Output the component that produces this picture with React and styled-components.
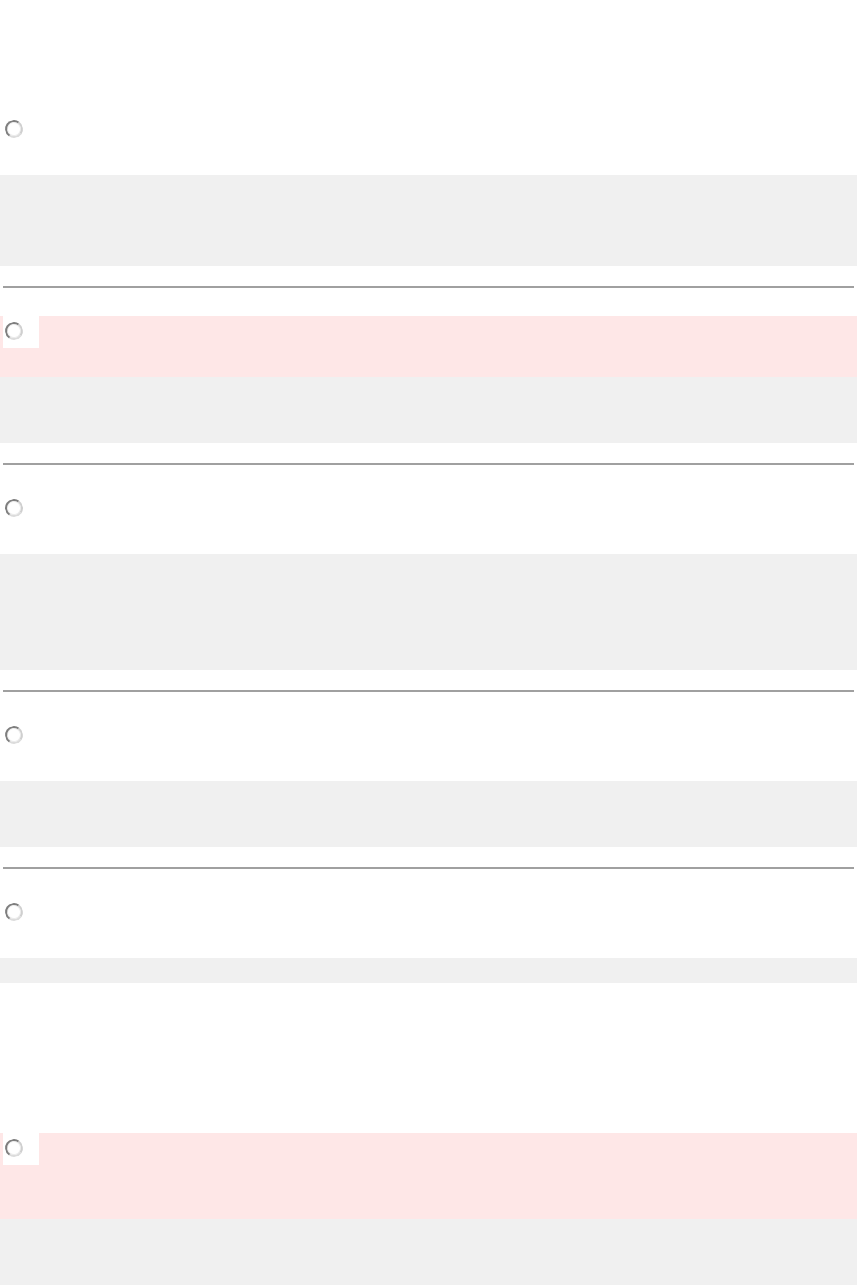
import React from "react";
import styled, { createGlobalStyle } from "styled-components";

const Global = createGlobalStyle`
  html, body { margin: 0; padding: 0; background: #ffffff; }
  body { font-family: "Liberation Sans", Arial, sans-serif; }
`;

const Page = styled.div`
  width: 857px;
  min-height: 1285px;
  padding-top: 114px;
  box-sizing: border-box;
  display: flex;
  flex-direction: column;
`;

const Question = styled.section`
  display: flex;
  flex-direction: column;
  margin-top: ${(p) => p.$gap || 0}px;
`;

const Header = styled.div`
  height: ${(p) => p.$h || 61}px;
  background: ${(p) => (p.$error ? "#fee7e7" : "#ffffff")};
  display: flex;
  align-items: flex-start;
`;

const RadioCell = styled.div`
  width: 36px;
  height: 32px;
  margin-left: 3px;
  padding: 6px 0 0 2px;
  box-sizing: border-box;
  background: #ffffff;
`;

const Radio = styled.span`
  display: block;
  width: 18px;
  height: 18px;
  box-sizing: border-box;
  border-radius: 50%;
  border: 2px solid;
  border-color: #7e7e7e #cfcfcf #dcdcdc #7e7e7e;
  background: #ffffff;
  box-shadow: inset 0 0 0 1px #ececec;
  transform: rotate(-10deg);
`;

const Body = styled.div`
  height: ${(p) => p.$h}px;
  background: #f0f0f0;
`;

const Rule = styled.hr`
  margin: 20px 3px 28px;
  border: 0;
  border-top: 2px solid #a0a0a0;
  height: 0;
`;

const questions = [
  { body: 91 },
  { body: 66, error: true },
  { body: 116 },
  { body: 66 },
  { body: 25, last: true },
];

export default function App() {
  return (
    <>
      <Global />
      <Page>
        {questions.map((q, i) => (
          <React.Fragment key={i}>
            <Question>
              <Header $error={q.error}>
                <RadioCell>
                  <Radio />
                </RadioCell>
              </Header>
              <Body $h={q.body} />
            </Question>
            {!q.last && <Rule />}
          </React.Fragment>
        ))}
        <Question $gap={150}>
          <Header $error $h={86}>
            <RadioCell>
              <Radio />
            </RadioCell>
          </Header>
          <Body $h={66} />
        </Question>
      </Page>
    </>
  );
}
